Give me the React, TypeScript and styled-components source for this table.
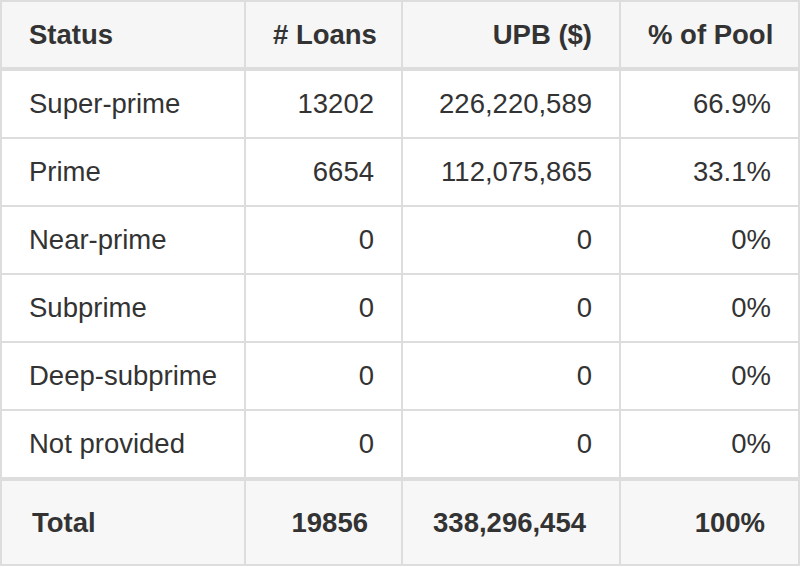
import React from "react";
import styled, { createGlobalStyle } from "styled-components";

const Global = createGlobalStyle`
  html, body { margin: 0; padding: 0; background: #ffffff; }
  body { font-family: "Liberation Sans", Arial, Helvetica, sans-serif; }
`;

const Table = styled.table`
  width: 800px;
  border-collapse: separate;
  border-spacing: 0;
  border-top: 2px solid #dddddd;
  border-left: 2px solid #dddddd;
  table-layout: fixed;
  font-family: "Liberation Sans", Arial, Helvetica, sans-serif;
  font-size: 27.5px;
  color: #333333;
`;

const Col = styled.col<{ $w: number }>`
  width: ${(p) => p.$w}px;
`;

const HeadCell = styled.th<{ $align?: "left" | "right" }>`
  height: 65px;
  padding: 0 27px;
  box-sizing: content-box;
  background: #f6f6f6;
  font-weight: 700;
  text-align: ${(p) => p.$align ?? "right"};
  vertical-align: middle;
  border-right: 2px solid #dddddd;
  border-bottom: 4px solid #dddddd;
  white-space: nowrap;
`;

const Cell = styled.td<{ $align?: "left" | "right" }>`
  height: 66px;
  padding: 0 27px;
  background: #ffffff;
  font-weight: 400;
  text-align: ${(p) => p.$align ?? "right"};
  vertical-align: middle;
  border-right: 2px solid #dddddd;
  border-bottom: 2px solid #dddddd;
  white-space: nowrap;
`;

const FootCell = styled.td<{ $align?: "left" | "right" }>`
  height: 83px;
  padding: 0 33px 0 30px;
  background: #f7f7f7;
  font-weight: 700;
  text-align: ${(p) => p.$align ?? "right"};
  vertical-align: middle;
  border-top: 2px solid #dddddd;
  border-right: 2px solid #dddddd;
  border-bottom: 2px solid #dddddd;
  white-space: nowrap;
`;

type Row = { status: string; loans: string; upb: string; pct: string };

const rows: Row[] = [
  { status: "Super-prime", loans: "13202", upb: "226,220,589", pct: "66.9%" },
  { status: "Prime", loans: "6654", upb: "112,075,865", pct: "33.1%" },
  { status: "Near-prime", loans: "0", upb: "0", pct: "0%" },
  { status: "Subprime", loans: "0", upb: "0", pct: "0%" },
  { status: "Deep-subprime", loans: "0", upb: "0", pct: "0%" },
  { status: "Not provided", loans: "0", upb: "0", pct: "0%" },
];

export default function App() {
  return (
    <>
      <Global />
      <Table>
        <colgroup>
          <Col $w={244} />
          <Col $w={157} />
          <Col $w={218} />
          <Col $w={179} />
        </colgroup>
        <thead>
          <tr>
            <HeadCell $align="left">Status</HeadCell>
            <HeadCell># Loans</HeadCell>
            <HeadCell>UPB ($)</HeadCell>
            <HeadCell>% of Pool</HeadCell>
          </tr>
        </thead>
        <tbody>
          {rows.map((r) => (
            <tr key={r.status}>
              <Cell $align="left">{r.status}</Cell>
              <Cell>{r.loans}</Cell>
              <Cell>{r.upb}</Cell>
              <Cell>{r.pct}</Cell>
            </tr>
          ))}
        </tbody>
        <tfoot>
          <tr>
            <FootCell $align="left">Total</FootCell>
            <FootCell>19856</FootCell>
            <FootCell>338,296,454</FootCell>
            <FootCell>100%</FootCell>
          </tr>
        </tfoot>
      </Table>
    </>
  );
}
